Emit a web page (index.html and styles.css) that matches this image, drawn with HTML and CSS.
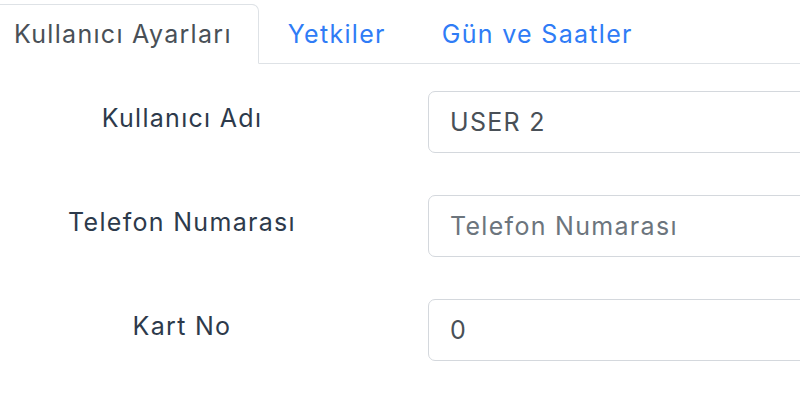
FILE: index.html
```html
<!DOCTYPE html>
<html lang="tr">
<head>
<meta charset="utf-8">
<link rel="stylesheet" href="styles.css">
</head>
<body>
<div class="page">
  <nav class="tabs">
    <a class="tab active">Kullanıcı Ayarları</a>
    <a class="tab">Yetkiler</a>
    <a class="tab">Gün ve Saatler</a>
  </nav>
  <div class="form">
    <div class="row">
      <label class="label">Kullanıcı Adı</label>
      <div class="input">USER 2</div>
    </div>
    <div class="row">
      <label class="label">Telefon Numarası</label>
      <div class="input placeholder">Telefon Numarası</div>
    </div>
    <div class="row">
      <label class="label">Kart No</label>
      <div class="input">0</div>
    </div>
  </div>
</div>
</body>
</html>
```
FILE: styles.css
```css
html, body { margin: 0; padding: 0; background: #fff; overflow: hidden; }
body { width: 800px; height: 400px; font-family: "Inter", "Open Sans", sans-serif; font-weight: 400; }
.page { margin-left: -15px; width: 1100px; }
.tabs {
  display: flex;
  padding-top: 4px;
  border-bottom: 1px solid #dee2e6;
}
.tab {
  display: block;
  height: 58px;
  line-height: 58px;
  padding: 0 26px 0 28px;
  font-size: 25px;
  letter-spacing: 1.3px;
  color: #2f7cf6;
  border: 1px solid transparent;
  border-radius: 7px 7px 0 0;
  margin-bottom: -1px;
  box-sizing: content-box;
}
.tab.active {
  color: #495057;
  border-color: #dee2e6 #dee2e6 #fff;
  background: #fff;
}
.form { padding-top: 27px; }
.row {
  display: grid;
  grid-template-columns: 394px 1fr;
  column-gap: 49px;
  align-items: center;
  margin-bottom: 42px;
}
.label {
  text-align: center;
  font-size: 25px;
  letter-spacing: 1.3px;
  color: #2d3a4b;
  padding-bottom: 8px;
}
.input {
  height: 60px;
  line-height: 60px;
  border: 1px solid #d4d8dd;
  border-radius: 7px;
  padding: 0 21px;
  font-size: 25px;
  letter-spacing: 1.3px;
  color: #495057;
}
.input.placeholder { color: #6c757d; }
```
